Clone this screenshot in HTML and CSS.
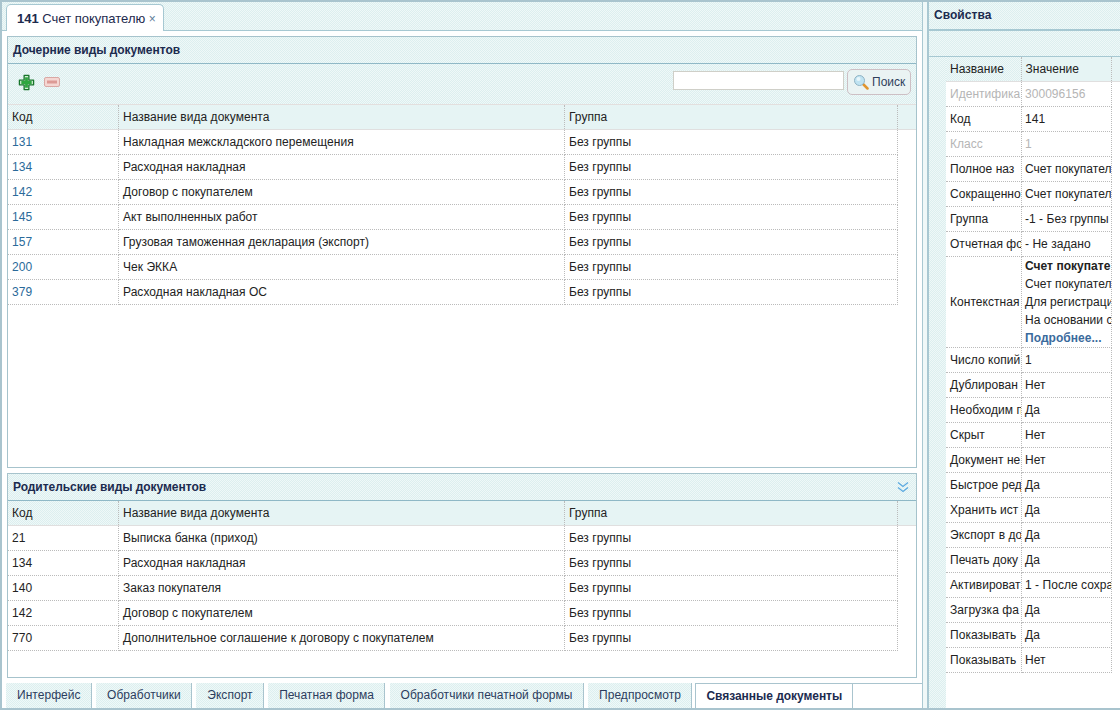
FILE: index.html
```html
<!DOCTYPE html>
<html lang="en">
    <head>
        <title>Счет покупателю</title>
        <link rel="stylesheet" href="styles.css">
    </head>
    <body>
        <div class="app">
            <div class="left-pane">
                <div class="top-tabs">
                    <div class="top-tab">
                        <span><b>141</b> Счет покупателю</span>
                        <span class="tab-close">×</span>
                    </div>
                </div>
                <div class="content">
                    <section class="panel panel-children">
                        <h2 class="panel-title">Дочерние виды документов</h2>
                        <div class="toolbar">
                            <svg class="icon-add" width="17" height="17" viewBox="0 0 18 18">
                                <path d="M6.500 1.500h5v5h5v5h-5v5h-5v-5h-5v-5h5z" fill="#d6f0d6" stroke="#16752b" stroke-width="1.400" stroke-linejoin="round"/>
                                <path d="M7.500 3.500h3v4h4v3h-4v4h-3v-4h-4v-3h4z" fill="#2ea63f"/>
                            </svg>
                            <svg class="icon-remove" width="16" height="12" viewBox="0 0 16 12">
                                <rect x="0.500" y="1.500" width="15" height="9" rx="1.500" fill="#f4d6d2" stroke="#d9a8a4"/>
                                <rect x="3" y="4.500" width="10" height="3" fill="#dc9a95"/>
                            </svg>
                            <input class="search-input" type="text">
                            <button class="search-btn">
                                <svg width="16" height="16" viewBox="0 0 16 16">
                                    <path d="M10 10l4.500 4.500" stroke="#e0952f" stroke-width="2.500" stroke-linecap="round"/>
                                    <circle cx="6.500" cy="6.500" r="5" fill="#bfe3f2" stroke="#8fb3c4"/>
                                    <circle cx="5.500" cy="5" r="2" fill="#e8f6fb"/>
                                </svg>
                                Поиск
                            </button>
                        </div>
                        <table class="grid">
                            <thead>
                                <tr><th class="col-code">Код</th><th class="col-name">Название вида документа</th><th class="col-group">Группа</th><th class="col-fill"></th></tr>
                            </thead>
                            <tbody>
                                <tr><td class="link-code">131</td><td>Накладная межскладского перемещения</td><td>Без группы</td></tr>
                                <tr><td class="link-code">134</td><td>Расходная накладная</td><td>Без группы</td></tr>
                                <tr><td class="link-code">142</td><td>Договор с покупателем</td><td>Без группы</td></tr>
                                <tr><td class="link-code">145</td><td>Акт выполненных работ</td><td>Без группы</td></tr>
                                <tr><td class="link-code">157</td><td>Грузовая таможенная декларация (экспорт)</td><td>Без группы</td></tr>
                                <tr><td class="link-code">200</td><td>Чек ЭККА</td><td>Без группы</td></tr>
                                <tr><td class="link-code">379</td><td>Расходная накладная ОС</td><td>Без группы</td></tr>
                            </tbody>
                        </table>
                    </section>
                    <section class="panel panel-parents">
                        <h2 class="panel-title">
                            Родительские виды документов
                            <svg class="icon-collapse" width="12" height="12" viewBox="0 0 12 12">
                                <path d="M1 1.500l5 4 5-4M1 6.500l5 4 5-4" fill="none" stroke="#5aa9e0" stroke-width="1.300"/>
                            </svg>
                        </h2>
                        <table class="grid">
                            <thead>
                                <tr><th class="col-code">Код</th><th class="col-name">Название вида документа</th><th class="col-group">Группа</th><th class="col-fill"></th></tr>
                            </thead>
                            <tbody>
                                <tr><td>21</td><td>Выписка банка (приход)</td><td>Без группы</td></tr>
                                <tr><td>134</td><td>Расходная накладная</td><td>Без группы</td></tr>
                                <tr><td>140</td><td>Заказ покупателя</td><td>Без группы</td></tr>
                                <tr><td>142</td><td>Договор с покупателем</td><td>Без группы</td></tr>
                                <tr><td>770</td><td>Дополнительное соглашение к договору с покупателем</td><td>Без группы</td></tr>
                            </tbody>
                        </table>
                    </section>
                </div>
                <div class="bottom-tabs">
                    <div class="bottom-tab">Интерфейс</div>
                    <div class="bottom-tab">Обработчики</div>
                    <div class="bottom-tab">Экспорт</div>
                    <div class="bottom-tab">Печатная форма</div>
                    <div class="bottom-tab">Обработчики печатной формы</div>
                    <div class="bottom-tab">Предпросмотр</div>
                    <div class="bottom-tab bottom-tab-active">Связанные документы</div>
                    <div class="bottom-fill"></div>
                </div>
            </div>
            <div class="splitter"></div>
            <aside class="props">
                <h2 class="props-title">Свойства</h2>
                <div class="props-toolbar"></div>
                <div class="props-body">
                    <div class="props-gutter"></div>
                    <table class="props-grid">
                        <thead>
                            <tr><th class="prop-name">Название</th><th class="prop-value">Значение</th><th class="prop-fill"></th></tr>
                        </thead>
                        <tbody>
                            <tr class="muted"><td>Идентифика</td><td>300096156</td></tr>
                            <tr><td>Код</td><td>141</td></tr>
                            <tr class="muted"><td>Класс</td><td>1</td></tr>
                            <tr><td>Полное наз</td><td>Счет покупател</td></tr>
                            <tr><td>Сокращенно</td><td>Счет покупател</td></tr>
                            <tr><td>Группа</td><td>-1 - Без группы</td></tr>
                            <tr><td>Отчетная фо</td><td>- Не задано</td></tr>
                            <tr class="tall">
                                <td>Контекстная</td>
                                <td>
                                    <div><b>Счет покупате</b></div>
                                    <div>Счет покупател</div>
                                    <div>Для регистраци</div>
                                    <div>На основании с</div>
                                    <div class="more">Подробнее...</div>
                                </td>
                            </tr>
                            <tr><td>Число копий</td><td>1</td></tr>
                            <tr><td>Дублирован</td><td>Нет</td></tr>
                            <tr><td>Необходим п</td><td>Да</td></tr>
                            <tr><td>Скрыт</td><td>Нет</td></tr>
                            <tr><td>Документ не</td><td>Нет</td></tr>
                            <tr><td>Быстрое ред</td><td>Да</td></tr>
                            <tr><td>Хранить ист</td><td>Да</td></tr>
                            <tr><td>Экспорт в до</td><td>Да</td></tr>
                            <tr><td>Печать доку</td><td>Да</td></tr>
                            <tr><td>Активироват</td><td>1 - После сохра</td></tr>
                            <tr><td>Загрузка фа</td><td>Да</td></tr>
                            <tr><td>Показывать</td><td>Да</td></tr>
                            <tr><td>Показывать</td><td>Нет</td></tr>
                        </tbody>
                    </table>
                </div>
            </aside>
        </div>
    </body>
</html>
```

FILE: styles.css
```css
* {
    box-sizing: border-box;
}

:root {
    --dither: repeating-conic-gradient(#dcefef 0 25%, #eff8f8 0 50%) 0 0 / 2px 2px;
}

body {
    margin: 0;
    width: 1120px;
    height: 710px;
    overflow: hidden;
    background: #fff;
    color: #222;
    font-family: "Liberation Sans", Arial, sans-serif;
    font-size: 12px;
    letter-spacing: 0.04px;
}

/* Page frame */
.app {
    display: flex;
    height: 710px;
    border-top: 2px solid #a9c4ce;
    border-bottom: 2px solid #a9c4ce;
    border-left: 2px solid #a9c4ce;
}

.left-pane {
    width: 920px;
    display: flex;
    flex-direction: column;
}

.splitter {
    width: 7px;
    background: #f0f8f8;
    border-left: 1px solid #a9c8d2;
    border-right: 2px solid #a9c8d2;
}

/* Top tab strip */
.top-tabs {
    height: 29px;
    padding: 2px 0 0 4px;
    flex: none;
    background: var(--dither);
    border-bottom: 1px solid #a6c8d2;
}

.top-tab {
    width: 158px;
    height: 27px;
    padding: 6px 0 0 10px;
    background: #fff;
    border: 1px solid #a6c8d2;
    border-bottom: none;
    border-radius: 5px 5px 0 0;
    color: #1d2a4d;
    white-space: nowrap;
    font-size: 13px;
    letter-spacing: 0;
}

.tab-close {
    font-size: 12px;
    color: #5c7d99;
}

/* Panels */
.content {
    flex: 1;
    min-height: 0;
    padding: 5px 5px 5px 5px;
    display: flex;
    flex-direction: column;
    gap: 5px;
}

.panel {
    border: 1px solid #a6c3cc;
}

.panel-children {
    height: 432px;
}

.panel-parents {
    height: 205px;
}

.panel-title {
    position: relative;
    height: 27px;
    margin: 0;
    padding: 6px 0 0 5px;
    background: var(--dither);
    border-bottom: 1px solid #8fb8c6;
    color: #1c2b4f;
    font-size: 12px;
    font-weight: bold;
    letter-spacing: -0.04px;
}

.icon-collapse {
    position: absolute;
    right: 7px;
    top: 7px;
}

.toolbar {
    height: 41px;
    padding: 0 5px 0 10px;
    display: flex;
    align-items: flex-start;
    background: var(--dither);
    border-bottom: 1px solid #e3dfde;
}

.icon-add {
    margin-top: 10px;
}

.icon-remove {
    margin: 12px 0 0 9px;
}

.search-input {
    width: 171px;
    height: 19px;
    margin: 7px 3px 0 auto;
    background: #fff;
    border: 1px solid #cfcfc8;
}

.search-btn {
    width: 64px;
    height: 26px;
    margin-top: 5px;
    padding: 0 0 0 5px;
    display: flex;
    align-items: center;
    gap: 3px;
    background: #eaf3f3;
    border: 1px solid #cdbfc4;
    border-radius: 5px;
    color: #2f3f5c;
    font-family: inherit;
    font-size: 12px;
}

/* Grids */
.grid {
    width: 908px;
    border-collapse: collapse;
    table-layout: fixed;
}

.grid th {
    height: 24px;
    padding: 0 4px 0 4.500px;
    background: var(--dither);
    border-bottom: 1px solid #e0dfdf;
    border-right: 1px dotted #bbb;
    text-align: left;
    font-weight: normal;
    color: #222;
}

.grid th:last-child {
    border-right: none;
}

.col-code {
    width: 110px;
}

.col-name {
    width: 446px;
}

.col-group {
    width: 333px;
}

.grid td {
    height: 25px;
    padding: 0 4px 0 4.500px;
    border-bottom: 1px dotted #bbb;
    border-right: 1px dotted #bbb;
    color: #222;
}

.grid th:first-child,
.grid td:first-child {
    padding-left: 4px;
}

.grid .link-code {
    color: #2a6a9a;
}

/* Bottom tabs */
.bottom-tabs {
    height: 25px;
    flex: none;
    padding-left: 4px;
    display: flex;
    gap: 4.500px;
}

.bottom-tab {
    padding: 5px 10px 0 11px;
    background: var(--dither);
    border-right: 1px solid #a9c4ce;
    color: #2c3d5e;
    white-space: nowrap;
}

.bottom-tab-active {
    margin: 0 -4.500px 0 -1px;
    padding-left: 10px;
    background: #fff;
    border-top: 1px solid #a9c4ce;
    border-left: 1px solid #a9c4ce;
    font-weight: bold;
    color: #1c2b4f;
    letter-spacing: -0.04px;
}

.bottom-fill {
    flex: 1;
    border-top: 1px solid #a9c4ce;
}

/* Properties */
.props {
    flex: 1;
    min-width: 0;
    display: flex;
    flex-direction: column;
}

.props-title {
    height: 27px;
    margin: 0;
    padding: 6px 0 0 5px;
    flex: none;
    background: var(--dither);
    color: #1c2b4f;
    font-size: 12px;
    font-weight: bold;
}

.props-toolbar {
    height: 28px;
    flex: none;
    background: var(--dither);
    border-top: 2px solid #a6c8d2;
    border-bottom: 1px solid #a6c8d2;
}

.props-body {
    flex: 1;
    display: flex;
}

.props-gutter {
    width: 17px;
    flex: none;
    background: var(--dither);
}

.props-grid {
    width: 174px;
    height: min-content;
    border-collapse: collapse;
    table-layout: fixed;
}

.props-grid th {
    height: 24px;
    padding: 0 4px;
    background: var(--dither);
    border-bottom: 1px solid #e0dfdf;
    border-right: 1px dotted #bbb;
    text-align: left;
    font-weight: normal;
}

.props-grid th:last-child {
    border-right: none;
}

.prop-name {
    width: 75px;
}

.prop-value {
    width: 90px;
}

.props-grid td {
    height: 25px;
    padding: 0 4px;
    border-bottom: 1px dotted #bbb;
    border-right: 1px dotted #bbb;
    white-space: nowrap;
    overflow: hidden;
}

.props-grid td:nth-child(2) {
    padding-left: 3.500px;
}

.props-grid .muted td {
    color: #b5b5b5;
}

.props-grid .tall td {
    height: 91px;
    line-height: 18px;
}

.more {
    color: #3a6a9c;
    font-weight: bold;
}
```
